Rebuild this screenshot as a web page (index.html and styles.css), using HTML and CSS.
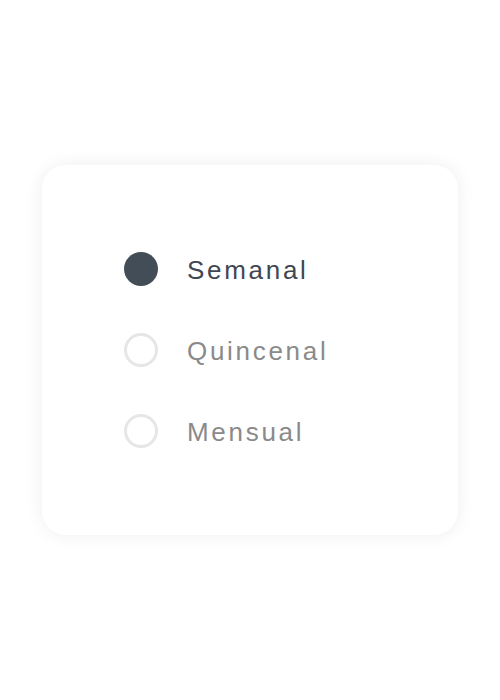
FILE: index.html
```html
<!DOCTYPE html>
<html lang="es">
<head>
<meta charset="utf-8">
<title>Frecuencia</title>
<link rel="stylesheet" href="styles.css">
</head>
<body>
<main class="page">
  <div class="card" role="radiogroup">
    <label class="option selected">
      <span class="radio"></span>
      <span class="label">Semanal</span>
    </label>
    <label class="option">
      <span class="radio"></span>
      <span class="label">Quincenal</span>
    </label>
    <label class="option">
      <span class="radio"></span>
      <span class="label">Mensual</span>
    </label>
  </div>
</main>
</body>
</html>
```
FILE: styles.css
```css
html, body {
  margin: 0;
  padding: 0;
  background: #ffffff;
}
.page {
  width: 500px;
  height: 700px;
  display: flex;
  align-items: center;
  justify-content: center;
}
.card {
  box-sizing: border-box;
  width: 416px;
  height: 370px;
  margin-top: -1px;
  border-radius: 24px;
  background: #ffffff;
  box-shadow: 0 0 18px rgba(0, 0, 0, 0.07);
  padding: 0 82px;
  display: flex;
  flex-direction: column;
  justify-content: center;
  gap: 47px;
}
.option {
  display: flex;
  align-items: center;
  gap: 29px;
  height: 34px;
  font-family: "Liberation Sans", Arial, sans-serif;
  font-size: 26px;
  letter-spacing: 2.7px;
  color: #8a8a8a;
}
.label {
  padding-top: 3px;
}
.radio {
  box-sizing: border-box;
  width: 34px;
  height: 34px;
  flex: none;
  border-radius: 50%;
  border: 3px solid #e6e6e6;
}
.option.selected .radio {
  border: none;
  background: #434d57;
}
.option.selected .label {
  color: #3f4852;
}
```
